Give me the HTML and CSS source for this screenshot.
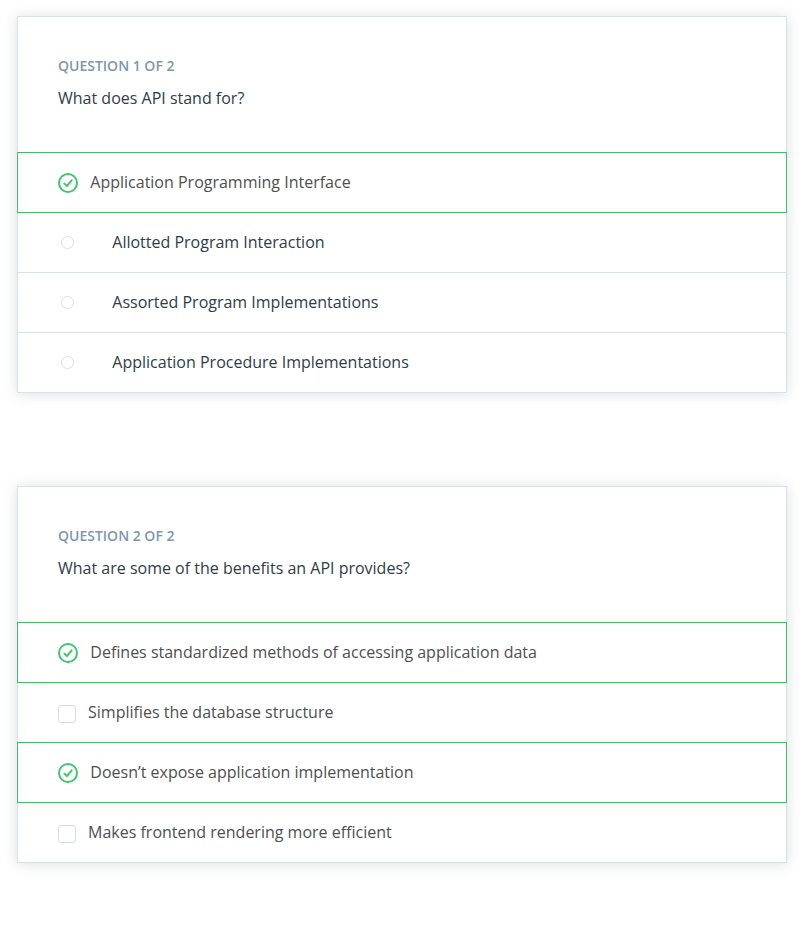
FILE: index.html
```html
<!DOCTYPE html>
<html lang="en">
<head>
<meta charset="utf-8">
<title>API quiz</title>
<link rel="stylesheet" href="styles.css">
</head>
<body>
<svg class="defs" width="0" height="0" aria-hidden="true">
  <symbol id="check" viewBox="0 0 20 20">
    <circle cx="10" cy="10" r="9" fill="none" stroke="currentColor" stroke-width="2"/>
    <path d="M6.4 10.6l2.5 2.4 4.8-5.7" fill="none" stroke="currentColor" stroke-width="2" stroke-linecap="round"/>
  </symbol>
</svg>
<main class="quiz">
  <section class="card">
    <header class="head">
      <h2 class="count">QUESTION 1 OF 2</h2>
      <p class="prompt">What does API stand for?</p>
    </header>
    <ul class="answers">
      <li class="answer correct"><svg class="check"><use href="#check"/></svg><span>Application Programming Interface</span></li>
      <li class="answer single"><i class="radio"></i><span>Allotted Program Interaction</span></li>
      <li class="answer single"><i class="radio"></i><span>Assorted Program Implementations</span></li>
      <li class="answer single"><i class="radio"></i><span>Application Procedure Implementations</span></li>
    </ul>
  </section>
  <section class="card">
    <header class="head">
      <h2 class="count">QUESTION 2 OF 2</h2>
      <p class="prompt">What are some of the benefits an API provides?</p>
    </header>
    <ul class="answers">
      <li class="answer correct"><svg class="check"><use href="#check"/></svg><span>Defines standardized methods of accessing application data</span></li>
      <li class="answer"><i class="box"></i><span>Simplifies the database structure</span></li>
      <li class="answer correct"><svg class="check"><use href="#check"/></svg><span>Doesn’t expose application implementation</span></li>
      <li class="answer"><i class="box"></i><span>Makes frontend rendering more efficient</span></li>
    </ul>
  </section>
</main>
</body>
</html>
```
FILE: styles.css
```css
* { box-sizing: border-box; }
body {
  margin: 0;
  background: #fff;
  color: #2e3d49;
  font: 16px/24px "Open Sans", sans-serif;
}
.defs { display: block; }
.quiz {
  display: flex;
  flex-direction: column;
  gap: 93px;
  padding: 16px 17px;
}
.card {
  border: 1px solid #d8e1e8;
  box-shadow: 0 1px 13px rgba(46, 61, 73, .17);
}
.head { height: 135px; padding: 37px 40px 0; }
.count {
  margin: 0;
  color: #7d97ad;
  font-size: 14px;
  font-weight: 600;
  line-height: 24px;
}
.prompt { margin: 8px 0 0; }
.answers {
  margin: 0 -1px;
  padding: 0;
  list-style: none;
}
.answer {
  display: flex;
  align-items: center;
  height: 60px;
  padding: 0 41px;
  color: #4f4f4f;
}
.single { color: #2e3d49; }
.single + .single {
  margin: 0 1px;
  border-top: 1px solid #d8e1e8;
  padding: 0 40px 1px;
}
.single + .single .radio { margin-top: 1px; }
.correct {
  height: 61px;
  margin-bottom: -1px;
  border: 1px solid #44bd6b;
  padding: 0 40px 1px;
}
.check {
  width: 20px;
  height: 20px;
  margin: 2px 12.3px 0 0;
  color: #43c470;
}
.radio {
  width: 13px;
  height: 13px;
  margin: 0 38.3px 0 3px;
  border: 1px solid #d8e1e8;
  border-radius: 50%;
}
.box {
  width: 18px;
  height: 18px;
  margin: 3px 12px 0 0;
  border: 1px solid #d5dde3;
  border-radius: 3px;
}
```
